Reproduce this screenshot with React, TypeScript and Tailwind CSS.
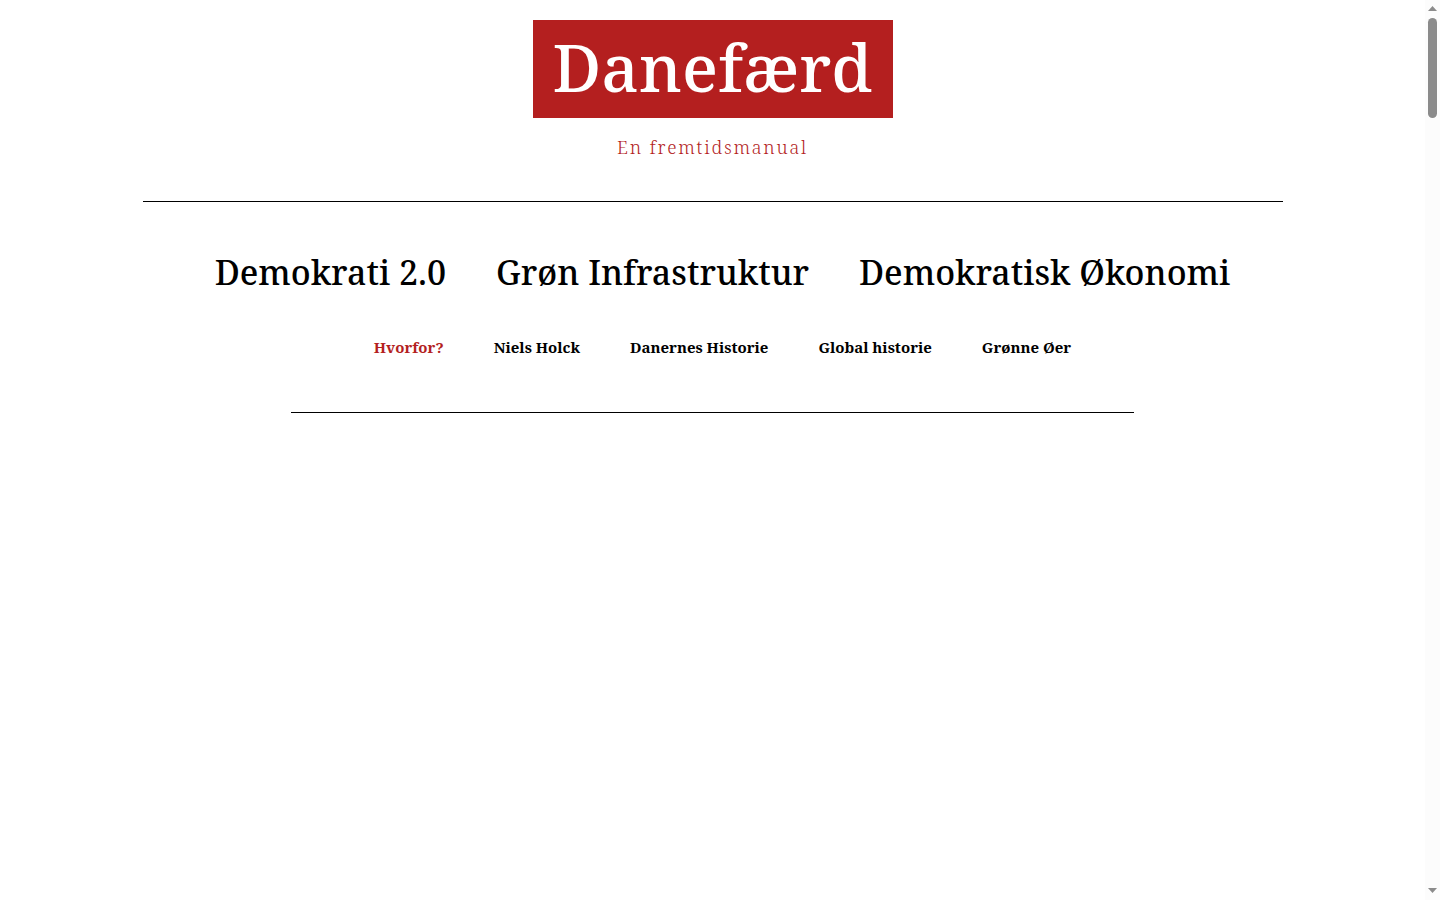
import React from 'react';

interface NavItem {
  label: string;
  href: string;
  active?: boolean;
}

const topics: NavItem[] = [
  { label: 'Demokrati 2.0', href: '#demokrati' },
  { label: 'Grøn Infrastruktur', href: '#infrastruktur' },
  { label: 'Demokratisk Økonomi', href: '#okonomi' },
];

const pages: NavItem[] = [
  { label: 'Hvorfor?', href: '#hvorfor', active: true },
  { label: 'Niels Holck', href: '#niels-holck' },
  { label: 'Danernes Historie', href: '#danernes-historie' },
  { label: 'Global historie', href: '#global-historie' },
  { label: 'Grønne Øer', href: '#gronne-oer' },
];

function Logo() {
  return (
    <a
      href="#top"
      className="flex h-[98px] w-[360px] items-center justify-center bg-[#b41f1f] pb-1.5 text-[66px] font-medium leading-none text-white"
    >
      Danefærd
    </a>
  );
}

function ScrollBar() {
  return (
    <div aria-hidden="true" className="sticky top-0 flex h-screen w-[15px] shrink-0 flex-col items-center bg-[#fcfcfc] pt-1.5 pb-[7px]">
      <svg width="9" height="5" viewBox="0 0 9 5" className="fill-[#8b8b8b]">
        <path d="M4.5 0 9 5H0z" />
      </svg>
      <div className="mt-[7px] h-[100px] w-[9px] rounded-full bg-[#8b8b8b]" />
      <svg width="9" height="5" viewBox="0 0 9 5" className="mt-auto fill-[#8b8b8b]">
        <path d="M0 0h9L4.5 5z" />
      </svg>
    </div>
  );
}

export default function App() {
  return (
    <div className="flex min-h-screen bg-white font-['Noto_Serif','Droid_Serif','Liberation_Serif',serif] text-black">
      <div className="min-w-0 flex-1">
        <header className="mx-auto flex max-w-[1140px] flex-col items-center pt-5">
          <Logo />
          <p className="mt-[15px] text-lg font-light leading-7 tracking-widest text-[#b41f1f]">En fremtidsmanual</p>
          <hr className="mt-10 w-full border-black" />

          <nav aria-label="Emner" className="mt-[43px] pl-5">
            <ul className="flex flex-wrap justify-center gap-x-[50px]">
              {topics.map((item) => (
                <li key={item.href}>
                  <a href={item.href} className="text-[34px] font-medium leading-[54px]">{item.label}</a>
                </li>
              ))}
            </ul>
          </nav>

          <nav aria-label="Sider" className="mt-9 pl-5">
            <ul className="flex flex-wrap justify-center gap-x-[50px]">
              {pages.map((item) => (
                <li key={item.href}>
                  <a
                    href={item.href}
                    aria-current={item.active ? 'page' : undefined}
                    className={`text-[15px] font-bold leading-6 ${item.active ? 'text-[#b41f1f]' : 'hover:text-[#b41f1f]'}`}
                  >
                    {item.label}
                  </a>
                </li>
              ))}
            </ul>
          </nav>

          <hr className="mt-[53px] w-[74%] border-black" />
        </header>
      </div>
      <ScrollBar />
    </div>
  );
}
